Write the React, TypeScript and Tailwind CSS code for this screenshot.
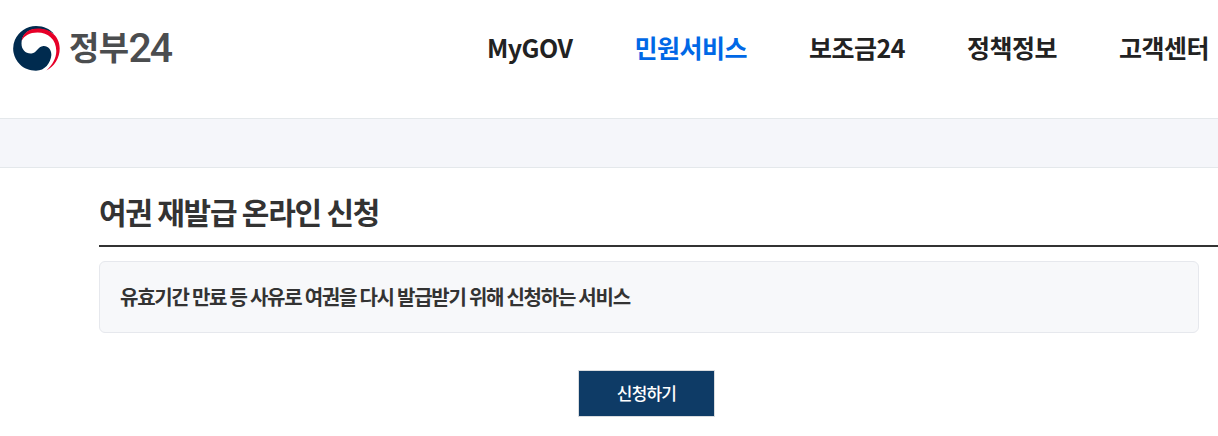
const items = [
  { t: 'MyGOV', c: 'text-[#222]' },
  { t: '민원서비스', c: 'text-[#0068e6]' },
  { t: '보조금24', c: 'text-[#222]' },
  { t: '정책정보', c: 'text-[#222]' },
  { t: '고객센터', c: 'text-[#222]' },
];

function Emblem() {
  return (
    <svg width="48" height="46" viewBox="0 0 48 46">
      <path fill="#002b4f" d="M8 39.500A23 22.500 0 0 1 24 1C32 1 38 4 42 9C37 5.500 31 4 25 4C15 4 9.500 11 9.500 18.500C9.500 25 14 29 19.500 28.500C25 28 25.500 21.500 31.500 21C36.500 20.800 39.700 25 39.300 30.500C38.500 38 33 45.700 24 45.700C17.500 45.700 12 43.500 8 39.500Z" />
      <path fill="#e60028" d="M9.500 16C11 8 17 3.600 26 3.600C39 3.600 47.700 12 47.700 23.500C47.700 33.500 42 41.500 34.500 45.500C40.500 40 44.300 33 44.300 26C44.300 14.500 36 7.500 25.500 7.500C17.500 7.500 12.500 10.500 9.500 16Z" />
    </svg>
  );
}

export default function App() {
  return (
    <div className="h-[436px] w-[1218px] overflow-hidden bg-white font-['Noto_Sans_CJK_KR',sans-serif]">
      <header className="flex h-[118px] justify-between pl-3 pr-[9px]">
        <a className="flex pt-[25px]">
          <Emblem />
          <span className="ml-[9px] flex text-[33px] font-bold leading-[42px] tracking-[-0.6px] text-[#4b4d4f]">
            정부
            <span className="font-['Roboto',sans-serif] text-[41px] font-medium leading-[47px] tracking-[-2.2px]">24</span>
          </span>
        </a>
        <nav className="flex gap-[62px] pt-[28px] text-[25px] font-bold leading-[38px] tracking-[-0.5px]">
          {items.map((i) => (
            <a key={i.t} className={i.c}>{i.t}</a>
          ))}
        </nav>
      </header>
      <div className="h-[50px] border-y border-[#e4e8eb] bg-[#f5f6fa]" />
      <main className="ml-[99px]">
        <h1 className="h-[79px] border-b-2 border-[#333] pt-[21px] text-[30px] font-bold leading-[44px] tracking-[-1.25px] text-[#333]">여권 재발급 온라인 신청</h1>
        <div className="mt-[14px] flex h-[72px] w-[1100px] items-center rounded-[6px] border border-[#e6e8ed] bg-[#f7f8fa] pl-5 text-[20px] font-bold tracking-[-1.25px] text-[#333]">유효기간 만료 등 사유로 여권을 다시 발급받기 위해 신청하는 서비스</div>
        <button className="ml-[479px] mt-[37px] h-[47px] w-[137px] border border-[#d9dcdf] bg-[#0e3b66] pb-px text-[17px] font-medium tracking-[-0.8px] text-white">신청하기</button>
      </main>
    </div>
  );
}
